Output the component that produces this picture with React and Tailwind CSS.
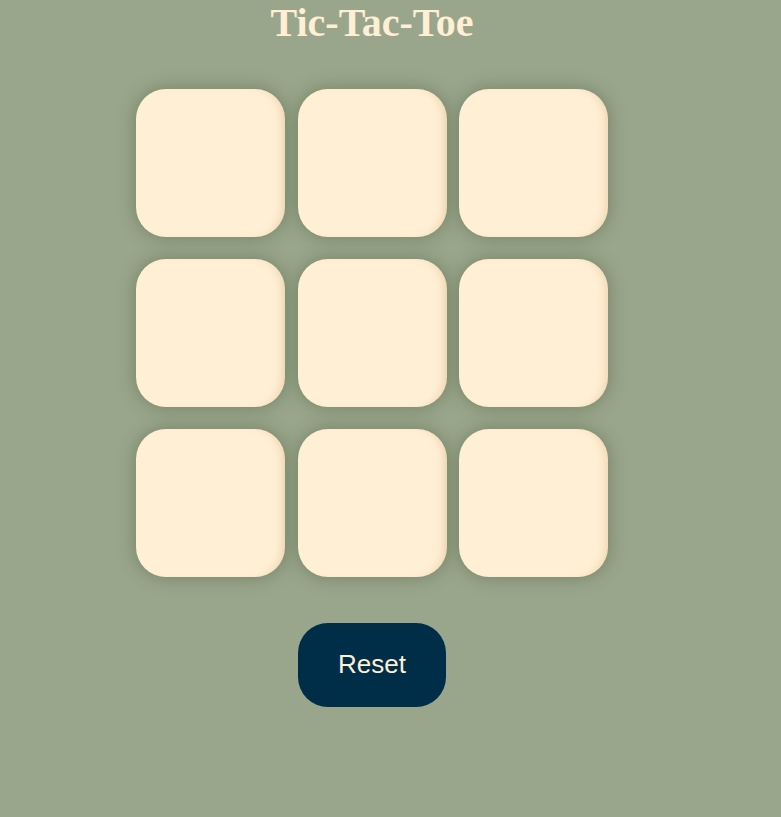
export default function App() {
  const cells = Array.from({ length: 9 });

  return (
    <div className="min-h-screen w-full bg-[#9aa68b]">
      <div className="w-[744px] flex flex-col items-center">
        <h1 className="m-0 text-[40px] leading-[46px] font-bold text-[#ffefd5] [font-family:'Liberation_Serif','Times_New_Roman',serif]">
          Tic-Tac-Toe
        </h1>
        <div className="mt-[43px] grid grid-cols-[149px_149px_149px] gap-x-[12.5px] gap-y-[22px]">
          {cells.map((_, i) => (
            <div
              key={i}
              className="w-[149px] h-[148px] rounded-[30px] bg-[#ffefd5] shadow-[0_0_18px_rgba(40,60,30,0.35),inset_-8px_0_10px_-6px_rgba(200,160,100,0.35)]"
            />
          ))}
        </div>
        <button className="mt-[46px] w-[148px] h-[84px] rounded-[30px] bg-[#002d48] text-[#ffefd5] text-[26px] leading-none pb-[2px] [font-family:'Liberation_Sans',Arial,sans-serif] cursor-pointer">
          Reset
        </button>
      </div>
    </div>
  );
}
